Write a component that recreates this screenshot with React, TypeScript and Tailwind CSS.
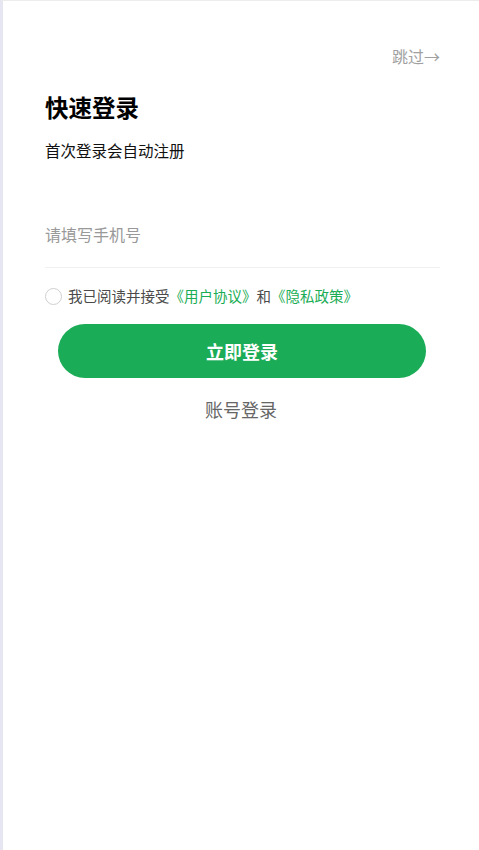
export default function App() {
    return (
        <div className="min-h-[850px] w-full bg-white border-t border-l-[3px] border-t-[#ececec] border-l-[#e6e6f2] font-['Noto_Sans_CJK_SC','Liberation_Sans',sans-serif]">
            <div className="pl-[42px] pr-[39px]">
                <div className="flex justify-end pt-[44px]">
                    <span className="text-[16px] leading-[22px] text-[#a0a0a0]">跳过→</span>
                </div>
                <h1 className="mt-[24px] text-[23.5px] leading-[32px] font-bold text-black">快速登录</h1>
                <p className="mt-[16px] text-[15.5px] leading-[22px] text-[#111]">首次登录会自动注册</p>
                <div className="mt-[61px] border-b border-[#f0f0f0] pb-[21px]">
                    <input
                        className="w-full text-[16px] leading-[22px] outline-none placeholder:text-[#999] text-[#333]"
                        placeholder="请填写手机号"
                    />
                </div>
                <label className="mt-[18px] flex items-center gap-[6px] text-[14.5px] leading-[20px]">
                    <span className="w-[17px] h-[17px] rounded-full border border-[#cfcfcf]" />
                    <span className="text-[#4a4a4a]">
                        我已阅读并接受<span className="text-[#1aad55]">《用户协议》</span>和<span className="text-[#1aad55]">《隐私政策》</span>
                    </span>
                </label>
            </div>
            <div className="pl-[55px] pr-[53px] mt-[18px]">
                <button className="w-full h-[54px] rounded-full bg-[#1bac57] text-white text-[18px] font-bold">立即登录</button>
            </div>
            <div className="mt-[18px] flex justify-center">
                <span className="text-[18px] leading-[26px] text-[#666]">账号登录</span>
            </div>
        </div>
    )
}
